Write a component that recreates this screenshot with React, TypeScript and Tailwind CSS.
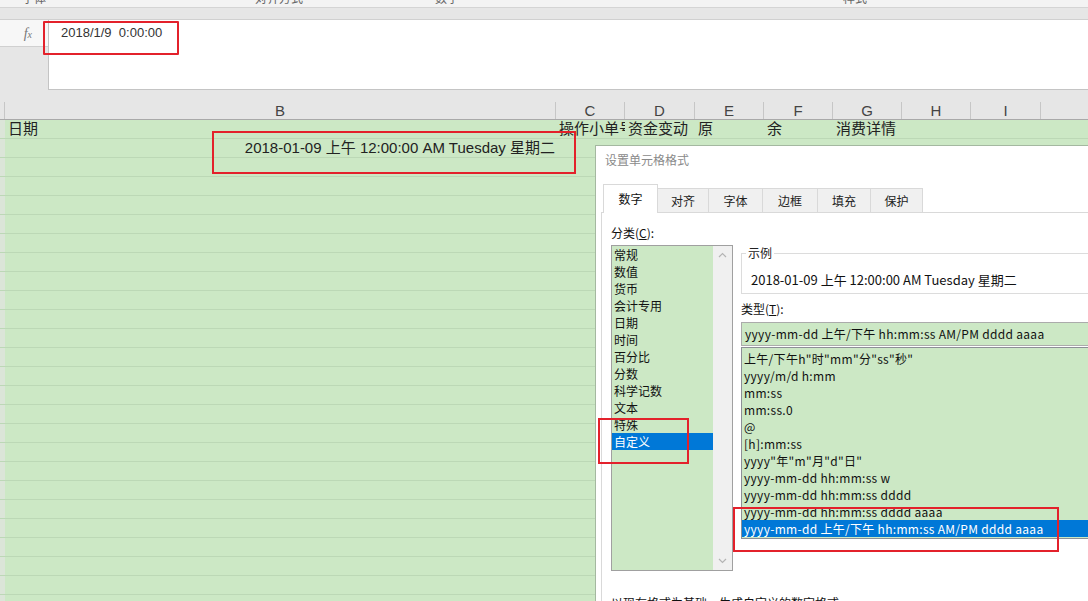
import React from 'react';

const categories = ['常规', '数值', '货币', '会计专用', '日期', '时间', '百分比', '分数', '科学记数', '文本', '特殊', '自定义'];

const formats = [
  '上午/下午h"时"mm"分"ss"秒"',
  'yyyy/m/d h:mm',
  'mm:ss',
  'mm:ss.0',
  '@',
  '[h]:mm:ss',
  'yyyy"年"m"月"d"日"',
  'yyyy-mm-dd hh:mm:ss w',
  'yyyy-mm-dd hh:mm:ss dddd',
  'yyyy-mm-dd hh:mm:ss dddd aaaa',
  'yyyy-mm-dd 上午/下午 hh:mm:ss AM/PM dddd aaaa',
];

const tabs = [
  { label: '对齐', w: 'w-[51px]' },
  { label: '字体', w: 'w-[54px]' },
  { label: '边框', w: 'w-[55px]' },
  { label: '填充', w: 'w-[53px]' },
  { label: '保护', w: 'w-[52px]' },
];

const columns = [
  { key: 'B', w: 'w-[551px]' },
  { key: 'C', w: 'w-[69px]' },
  { key: 'D', w: 'w-[70px]' },
  { key: 'E', w: 'w-[69px]' },
  { key: 'F', w: 'w-[69px]' },
  { key: 'G', w: 'w-[69px]' },
  { key: 'H', w: 'w-[69px]' },
  { key: 'I', w: 'w-[70px]' },
];

const firstRow = ['日期', '操作小单号', '资金变动', '原', '余', '消费详情', '', ''];

const Chevron: React.FC<{ up?: boolean }> = ({ up }) => (
  <svg width="9" height="6" viewBox="0 0 9 6" className="text-[#b4b4b4]">
    <path d={up ? 'M1 5 L4.5 1.5 L8 5' : 'M1 1 L4.5 4.5 L8 1'} fill="none" stroke="currentColor" strokeWidth="1.2" />
  </svg>
);

const App: React.FC = () => {
  const rows = Array.from({ length: 26 }, (_, i) => i);

  return (
    <div className="relative w-[1088px] h-[601px] overflow-hidden bg-[#e6e6e6] font-['Liberation_Sans','Noto_Sans_CJK_SC',sans-serif] text-[#222]">
      {/* ribbon remnant */}
      <div className="h-[8px] bg-[#f3f3f3] border-b border-[#d4d4d4] overflow-hidden flex text-[12px] leading-[14px] text-[#666]">
        <span className="ml-[22px] -mt-[8px]">字体</span>
        <span className="ml-[106px] -mt-[9px] w-[8px] h-[8px] border border-[#999]" />
        <span className="ml-[95px] -mt-[8px]">对齐方式</span>
        <span className="ml-[69px] -mt-[9px] w-[8px] h-[8px] border border-[#999]" />
        <span className="ml-[55px] -mt-[8px]">数字</span>
        <span className="ml-[54px] -mt-[9px] w-[8px] h-[8px] border border-[#999]" />
        <span className="ml-[322px] -mt-[8px]">样式</span>
      </div>
      <div className="h-[11px] bg-[#e6e6e6]" />

      {/* formula bar */}
      <div className="flex h-[71px] border-t border-[#d0d0d0]">
        <div className="w-[48px] flex flex-col">
          <div className="h-[27px] bg-[#f7f7f7] border-b border-[#d0d0d0] flex items-center justify-end pr-[16px]">
            <span className="font-['Liberation_Serif',serif] italic text-[14px] text-[#777]">
              f<span className="text-[10px]">x</span>
            </span>
          </div>
        </div>
        <div className="flex-1 bg-white border-l border-b border-[#c4c4c4] pl-[12px] pt-[5px] text-[13px] leading-[16px] text-[#333] whitespace-pre">
          2018/1/9  0:00:00
        </div>
      </div>
      <div className="h-[12px]" />

      {/* column headers */}
      <div className="flex h-[18px] border-b border-[#a9a9a9] text-[15px] leading-[17px] text-[#444]">
        <div className="w-[5px] border-r border-[#c6c6c6]" />
        {columns.map((c) => (
          <div key={c.key} className={`${c.w} border-r border-[#c6c6c6] text-center`}>
            {c.key}
          </div>
        ))}
        <div className="flex-1" />
      </div>

      {/* sheet body */}
      <div className="flex flex-col">
        {rows.map((r) => (
          <div key={r} className="flex h-[19px] border-b border-[#bcd8b6] bg-[#cce8c5] text-[15px] leading-[18px]">
            <div className="w-[5px] bg-[#dbe5d8]" />
            {r === 0 &&
              columns.map((c, i) => (
                <div key={c.key} className={`${c.w} pl-[3px] overflow-hidden whitespace-nowrap`}>
                  {firstRow[i]}
                </div>
              ))}
            {r === 1 && (
              <div className="w-[551px] pr-[1px] text-right whitespace-nowrap">
                2018-01-09 上午 12:00:00 AM Tuesday 星期二
              </div>
            )}
          </div>
        ))}
      </div>

      {/* format cells dialog */}
      <div className="absolute left-[595px] top-[145px] w-[520px] h-[470px] bg-white border border-[#a4b8a0] font-['Noto_Sans_CJK_SC',sans-serif] text-[12px] text-[#111]">
        <div className="h-[30px] pl-[9px] pt-[6px] leading-[16px] text-[#8a8a8a]">设置单元格格式</div>
        <div className="mt-[8px] ml-[7px] flex items-end h-[28px] relative z-10">
          <div className="w-[55px] h-[29px] -mb-[1px] bg-white border-l border-t border-r border-[#d9d9d9] flex items-center justify-center leading-[16px]">
            数字
          </div>
          {tabs.map((t) => (
            <div
              key={t.label}
              className={`${t.w} h-[24px] bg-[#f0f0f0] border-t border-r border-[#d9d9d9] flex items-center justify-center leading-[16px] text-[#222]`}
            >
              {t.label}
            </div>
          ))}
        </div>
        <div className="ml-[5px] border-t border-l border-[#d9d9d9] flex h-[400px]">
          {/* category column */}
          <div className="w-[132px] pl-[9px] shrink-0">
            <div className="mt-[12px] leading-[16px]">
              分类(<span className="underline">C</span>):
            </div>
            <div className="mt-[4px] w-[122px] h-[326px] border border-[#a0a0a0] flex">
              <div className="w-[101px] bg-[#cce8c5] leading-[17px]">
                {categories.map((c) => (
                  <div key={c} className={c === '自定义' ? 'pl-[2px] bg-[#0078d7] text-white' : 'pl-[2px]'}>
                    {c}
                  </div>
                ))}
              </div>
              <div className="flex-1 bg-[#f0f0f0] flex flex-col items-center justify-between py-[6px]">
                <Chevron up />
                <Chevron />
              </div>
            </div>
            <div className="mt-[24px] leading-[16px] whitespace-nowrap">以现有格式为基础，生成自定义的数字格式。</div>
          </div>

          {/* type column */}
          <div className="ml-[7px] w-[380px] shrink-0">
            <fieldset className="mt-[31px] border border-[#dcdcdc] pb-[4px]">
              <legend className="ml-[4px] px-[2px] leading-[18px] text-[#222]">示例</legend>
              <div className="mt-[9px] pl-[9px] text-[13px] leading-[18px]">2018-01-09 上午 12:00:00 AM Tuesday 星期二</div>
            </fieldset>
            <div className="mt-[7px] leading-[16px]">
              类型(<span className="underline">T</span>):
            </div>
            <div className="mt-[5px] h-[24px] border border-[#ababab] bg-[#cce8c5] pl-[3px] leading-[22px] tracking-[0.3px] whitespace-nowrap">
              yyyy-mm-dd 上午/下午 hh:mm:ss AM/PM dddd aaaa
            </div>
            <div className="mt-[1px] h-[192px] border border-[#8c8f96] bg-[#cce8c5] pt-[2px] leading-[17px] tracking-[0.3px]">
              {formats.map((f, i) => (
                <div key={f} className={i === formats.length - 1 ? 'pl-[2px] bg-[#0078d7] text-white whitespace-nowrap' : 'pl-[2px] whitespace-nowrap'}>
                  {f}
                </div>
              ))}
            </div>
          </div>
        </div>
      </div>

      {/* red annotation boxes */}
      <div className="absolute left-[43px] top-[21px] w-[136px] h-[34px] border-2 border-[#e3212b] rounded-[1px]" />
      <div className="absolute left-[212px] top-[131px] w-[364px] h-[43px] border-2 border-[#e3212b]" />
      <div className="absolute left-[598px] top-[418px] w-[91px] h-[46px] border-2 border-[#e3212b]" />
      <div className="absolute left-[733px] top-[507px] w-[326px] h-[45px] border-2 border-[#e3212b]" />
    </div>
  );
};

export default App;
